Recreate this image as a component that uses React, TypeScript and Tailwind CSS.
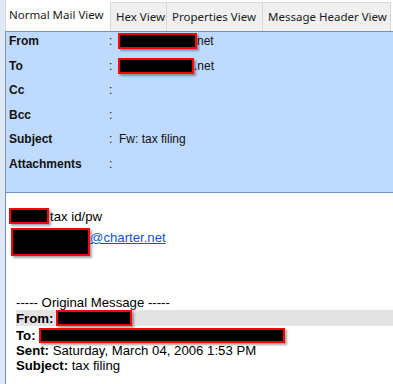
import React from "react";

const TABS = [
  { label: "Normal Mail View", w: "w-[105px]" },
  { label: "Hex View", w: "w-[56px]" },
  { label: "Properties View", w: "w-[96px]" },
  { label: "Message Header View", w: "w-[128px]" },
];

function Redact({ className = "" }: { className?: string }) {
  return (
    <span
      className={`inline-block shrink-0 bg-black border-2 border-[#ff0000] shadow-[2px_2px_2px_rgba(0,0,0,0.35)] ${className}`}
    />
  );
}

function HeaderRow({ label, children }: { label: string; children?: React.ReactNode }) {
  return (
    <div className="flex items-start h-[24.6px] pt-[1px] leading-[16px]">
      <div className="w-[100px] font-bold">{label}</div>
      <div className="w-[9px]">:</div>
      <div className="flex items-start">{children}</div>
    </div>
  );
}

export default function App() {
  return (
    <div className="w-[393px] h-[384px] overflow-hidden bg-white flex text-black">
      <div className="w-[5px] bg-[#dfe8f5] shrink-0" />
      <div className="flex-1 flex flex-col min-w-0">
        {/* Tabs */}
        <div className="flex h-[31px] items-end text-[11.5px] whitespace-nowrap font-['Noto_Sans','Open_Sans',sans-serif] text-[#1a1a1a]">
          {TABS.map((t, i) => (
            <div
              key={t.label}
              className={
                i === 0
                  ? `${t.w} shrink-0 h-[31px] pl-[3px] pb-[2px] flex items-center bg-white border-l border-[#d9d9d9] overflow-hidden`
                  : `${t.w} shrink-0 h-[29px] pl-[5px] flex items-center bg-[#f0f0f0] border-l border-t border-[#d9d9d9] overflow-hidden`
              }
            >
              {t.label}
            </div>
          ))}
          <div className="flex-1 h-[29px] border-l border-[#d9d9d9]" />
        </div>

        {/* Header panel */}
        <div className="h-[162px] bg-[#bfdaff] border-t border-b border-l border-[#6f93c9] pl-[3px] text-[12px] font-['Liberation_Sans',sans-serif] text-[#111]">
          <HeaderRow label="From">
            <Redact className="w-[79px] h-[16px]" />
            <span>net</span>
          </HeaderRow>
          <HeaderRow label="To">
            <Redact className="w-[76px] h-[16px]" />
            <span>.net</span>
          </HeaderRow>
          <HeaderRow label="Cc" />
          <HeaderRow label="Bcc" />
          <HeaderRow label="Subject">
            <span className="pl-[1px]">Fw: tax filing</span>
          </HeaderRow>
          <HeaderRow label="Attachments" />
        </div>

        {/* Body */}
        <div className="flex-1 border-l border-[#6f93c9] font-['Liberation_Sans',sans-serif] text-[13.2px] leading-[15px]">
          <div className="pl-[3px] pt-[15px] flex items-center">
            <Redact className="w-[40px] h-[16px]" />
            <span className="ml-[1px]">tax id/pw</span>
          </div>
          <div className="pl-[5px] mt-[4px] flex items-start">
            <Redact className="w-[79px] h-[28px]" />
            <span className="text-[#1155cc] underline mt-[2px]">@charter.net</span>
          </div>

          <div className="pl-[10px] mt-[39px]">
            <div>----- Original Message -----</div>
            <div className="bg-[#e3e3e3] h-[16px] flex items-center">
              <b>From:</b>
              <Redact className="ml-[3px] w-[76px] h-[16px]" />
            </div>
            <div className="flex items-center mt-[2px]">
              <b>To:</b>
              <Redact className="ml-[3px] w-[246px] h-[15px]" />
            </div>
            <div>
              <b>Sent:</b> Saturday, March 04, 2006 1:53 PM
            </div>
            <div>
              <b>Subject:</b> tax filing
            </div>
          </div>
        </div>
      </div>
    </div>
  );
}
